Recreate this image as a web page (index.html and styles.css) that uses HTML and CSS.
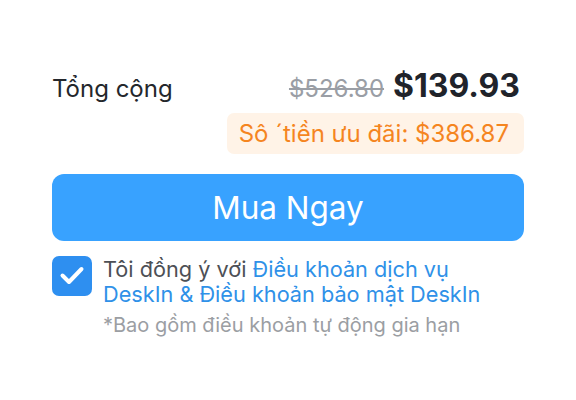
FILE: index.html
```html
<!DOCTYPE html>
<html lang="vi">
<head>
<meta charset="utf-8">
<link rel="stylesheet" href="styles.css">
</head>
<body>
<div class="panel">
  <div class="total-row">
    <span class="total-label">Tổng cộng</span>
    <span class="prices">
      <span class="old-price">$526.80</span>
      <span class="new-price">$139.93</span>
    </span>
  </div>
  <div class="saving-row">
    <span class="saving">Sô &#180;tiền ưu đãi: $386.87</span>
  </div>
  <button class="buy">Mua Ngay</button>
  <div class="agree">
    <span class="checkbox">
      <svg viewBox="0 0 40 40" width="40" height="40"><path d="M10.5 19.5 L17 26 L29.5 13" fill="none" stroke="#fff" stroke-width="4" stroke-linecap="round" stroke-linejoin="round"/></svg>
    </span>
    <div class="agree-text">
      <p class="terms">Tôi đồng ý với <a class="link">Điều khoản dịch vụ DeskIn &amp; Điều khoản bảo mật DeskIn</a></p>
      <p class="note">*Bao gồm điều khoản tự động gia hạn</p>
    </div>
  </div>
</div>
</body>
</html>
```
FILE: styles.css
```css
html, body {
  margin: 0;
  padding: 0;
  background: #ffffff;
}
body {
  font-family: Inter, "Noto Sans", sans-serif;
  width: 576px;
  height: 400px;
}
.panel {
  padding: 66px 52px 0 52px;
  display: flex;
  flex-direction: column;
}
.total-row {
  display: flex;
  justify-content: space-between;
  align-items: baseline;
  line-height: 40px;
}
.total-label {
  font-size: 24px;
  color: #24272c;
}
.prices {
  display: flex;
  align-items: baseline;
  gap: 9px;
  padding-right: 4px;
}
.old-price {
  font-size: 24px;
  color: #9a9ea5;
  text-decoration: line-through;
  text-decoration-thickness: 2px;
}
.new-price {
  font-size: 32px;
  font-weight: 700;
  color: #20232a;
}
.saving-row {
  display: flex;
  justify-content: flex-end;
  margin-top: 4px;
}
.saving {
  background: #fff3e7;
  color: #f5851f;
  font-size: 24px;
  line-height: 41px;
  padding: 0 15px 0 12px;
  border-radius: 7px;
}
.buy {
  margin-top: 20px;
  height: 67px;
  border: none;
  border-radius: 12px;
  background: #38a2ff;
  color: #ffffff;
  font-family: Inter, "Noto Sans", sans-serif;
  font-size: 31.5px;
  font-weight: 400;
  padding: 0;
}
.agree {
  display: flex;
  gap: 11px;
  margin-top: 15px;
}
.checkbox {
  flex: none;
  width: 40px;
  height: 40px;
  border-radius: 7px;
  background: #2e8ff0;
}
.checkbox svg {
  display: block;
}
.agree-text {
  max-width: 400px;
  padding-top: 1px;
}
.terms {
  margin: 0;
  font-size: 21.7px;
  line-height: 25px;
  color: #4d5056;
}
.link {
  color: #2f91e8;
}
.note {
  margin: 6px 0 0 0;
  font-size: 20px;
  line-height: 24px;
  color: #9b9ea3;
}
```
